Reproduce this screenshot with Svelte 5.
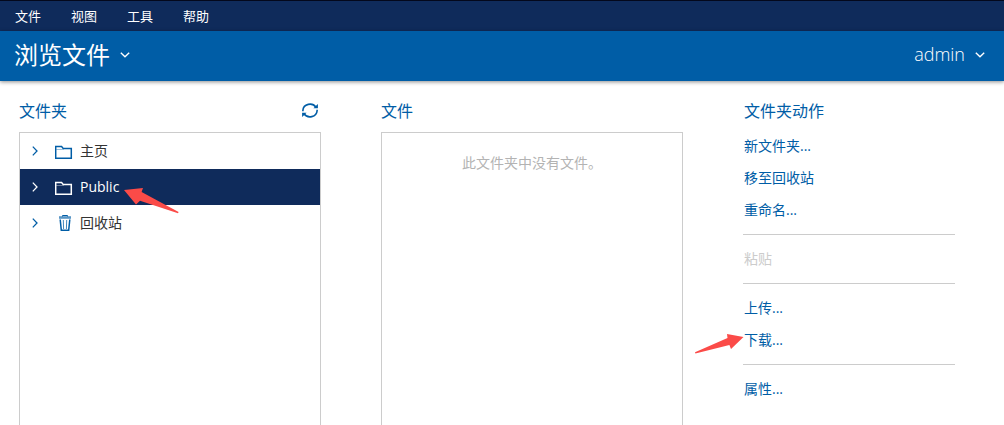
<script>
  const menus = ['文件', '视图', '工具', '帮助'];
  const folders = [
    { name: '主页', icon: 'folder' },
    { name: 'Public', icon: 'folder', marked: true },
    { name: '回收站', icon: 'trash' }
  ];
  let selected = $state('Public');

  const actionGroups = [
    [{ label: '新文件夹...' }, { label: '移至回收站' }, { label: '重命名...' }],
    [{ label: '粘贴', disabled: true }],
    [{ label: '上传...' }, { label: '下载...', marked: true }],
    [{ label: '属性...' }]
  ];
</script>

{#snippet chevron()}
  <svg class="chevron" width="10" height="6" viewBox="0 0 10 6" aria-hidden="true">
    <path d="M0.8 0.8 L5 4.7 L9.2 0.8" fill="none" stroke="currentColor" stroke-width="1.4" />
  </svg>
{/snippet}

<div class="page">
  <nav class="menubar">
    {#each menus as menu}
      <button>{menu}</button>
    {/each}
  </nav>

  <header class="banner">
    <button class="title"><span>浏览文件</span>{@render chevron()}</button>
    <button class="user"><span>admin</span>{@render chevron()}</button>
  </header>

  <main class="columns">
    <section class="column">
      <div class="heading">
        <h2>文件夹</h2>
        <button class="refresh" aria-label="刷新">
          <svg width="16" height="16" viewBox="0 0 16 16" aria-hidden="true">
            <g fill="none" stroke="currentColor" stroke-width="1.6">
              <path d="M0.9 9.2 V8.2 A7.1 6.4 0 0 1 14 5.2" />
              <path d="M15.1 7.8 V8.8 A7.1 6.4 0 0 1 2 11.8" />
            </g>
            <path d="M15.9 2 V6.2 H11.4 Z M0.1 15 V10.8 H4.6 Z" fill="currentColor" />
          </svg>
        </button>
      </div>
      <ul class="box tree">
        {#each folders as folder}
          <li>
            <button
              class="folder"
              class:selected={selected === folder.name}
              onclick={() => (selected = folder.name)}
            >
              <svg class="expander" width="6" height="10" viewBox="0 0 6 10" aria-hidden="true">
                <path d="M0.8 0.6 L5 5 L0.8 9.4" fill="none" stroke="currentColor" stroke-width="1.3" />
              </svg>
              {#if folder.icon === 'folder'}
                <svg class="icon" width="18" height="16" viewBox="0 0 18 16" aria-hidden="true">
                  <path d="M0.7 15.3 V3.6 H6.6 L8.2 5.4 H16.3 V15.3 Z" fill="none" stroke="currentColor" stroke-width="1.5" />
                  <path d="M1.2 6.5 H7.5 L9 6" fill="none" stroke="currentColor" opacity="0.4" />
                </svg>
              {:else}
                <svg class="icon" width="18" height="16" viewBox="0 0 18 16" aria-hidden="true">
                  <path d="M7.5 1.5 V0.5 H12.5 V1.5" fill="none" stroke="currentColor" />
                  <path d="M4 1.2 H16 V3.8 H4 Z" fill="currentColor" opacity="0.65" />
                  <path d="M5.2 4.5 L6.3 15.3 H13.7 L14.8 4.5" fill="none" stroke="currentColor" stroke-width="1.5" />
                  <path d="M8.3 5 L8.6 14 M11.7 5 L11.4 14" fill="none" stroke="currentColor" opacity="0.75" />
                </svg>
              {/if}
              <span class="name">
                {folder.name}
                {#if folder.marked}
                  <svg class="arrow to-folder" width="57" height="28" viewBox="0 0 57 28" aria-hidden="true">
                    <path d="M1 3 L20 1 L18.6 5 L55.6 25 L55 26.2 L17 13.8 L13 17.5 Z" fill="#fb4b48" />
                  </svg>
                {/if}
              </span>
            </button>
          </li>
        {/each}
      </ul>
    </section>

    <section class="column">
      <div class="heading"><h2>文件</h2></div>
      <div class="box"><p class="empty">此文件夹中没有文件。</p></div>
    </section>

    <section class="column actions">
      <div class="heading"><h2>文件夹动作</h2></div>
      {#each actionGroups as group}
        <div class="group">
          {#each group as action}
            <button class="action" disabled={action.disabled}>
              {action.label}
              {#if action.marked}
                <svg class="arrow to-action" width="50" height="22" viewBox="0 0 50 22" aria-hidden="true">
                  <path d="M1 19.2 L33.5 5 L33 1 L49.5 4 L37 16 L35.4 12 L1.4 20.4 Z" fill="#fb4b48" />
                </svg>
              {/if}
            </button>
          {/each}
        </div>
      {/each}
    </section>
  </main>
</div>

<style>
  :global(body) {
    margin: 0;
    background: #fff;
  }
  .page {
    display: flex;
    flex-direction: column;
    min-height: 100vh;
    font-family: 'Open Sans', 'Noto Sans CJK SC', sans-serif;
    font-size: 14px;
    color: #333;
  }
  button {
    margin: 0;
    padding: 0;
    border: 0;
    background: none;
    font: inherit;
    color: inherit;
    text-align: left;
    cursor: pointer;
  }
  svg {
    flex: none;
    display: block;
  }
  .menubar {
    display: flex;
    gap: 30px;
    height: 30px;
    padding: 0 15px;
    border-top: 1px solid #03081c;
    background: #0f2b5b;
    color: #fff;
    font-size: 13px;
  }
  .menubar button {
    padding-bottom: 2px;
  }
  .banner {
    display: flex;
    justify-content: space-between;
    height: 48px;
    padding: 0 19px 2px 14px;
    background: #005da6;
    box-shadow: 0 1px 4px rgba(0, 0, 0, 0.45);
    color: #fff;
  }
  .title,
  .user {
    display: flex;
    align-items: center;
    gap: 10px;
    font-size: 24px;
  }
  .title span {
    padding-bottom: 4px;
  }
  .user {
    font-size: 18px;
    font-weight: 300;
  }
  .user span {
    padding-bottom: 2px;
  }
  .columns {
    flex: 1;
    display: grid;
    grid-template-columns: 302fr 302fr 212fr;
    gap: 60px;
    padding: 15px 49px 0 19px;
  }
  .column {
    display: flex;
    flex-direction: column;
  }
  .heading {
    display: flex;
    align-items: center;
    justify-content: space-between;
    height: 28px;
    margin-bottom: 8px;
    padding-right: 3px;
    color: #005da6;
  }
  h2 {
    margin: 0;
    font-size: 16px;
    font-weight: 400;
  }
  .box {
    flex: 1;
    margin: 0;
    padding: 0;
    border: 1px solid #ccc;
    border-bottom: 0;
    list-style: none;
  }
  .folder {
    display: flex;
    align-items: center;
    width: 100%;
    height: 36px;
    padding-left: 12px;
  }
  .expander {
    margin-right: 17px;
    color: #005da6;
  }
  .icon {
    margin-right: 7px;
    color: #005da6;
  }
  .selected,
  .selected svg {
    color: #fff;
  }
  .selected {
    background: #0f2b5b;
  }
  .name,
  .action {
    position: relative;
    padding-bottom: 2px;
  }
  .arrow {
    position: absolute;
    pointer-events: none;
  }
  .to-folder {
    left: 100%;
    top: 10px;
    margin-left: 4px;
  }
  .to-action {
    right: 100%;
    top: 9px;
    margin-right: -1px;
  }
  .empty {
    margin: 20px 0;
    text-align: center;
    line-height: 20px;
    color: #b3b3b3;
  }
  .group {
    display: flex;
    flex-direction: column;
    align-items: flex-start;
    padding-bottom: 8px;
  }
  .group + .group {
    padding-top: 8px;
    border-top: 1px solid #ccc;
  }
  .heading + .group {
    margin-top: -2px;
  }
  .action {
    height: 32px;
    color: #005da6;
  }
  .actions h2,
  .action {
    padding-left: 1px;
  }
  .action:disabled {
    color: #ccc;
    cursor: default;
  }
</style>
